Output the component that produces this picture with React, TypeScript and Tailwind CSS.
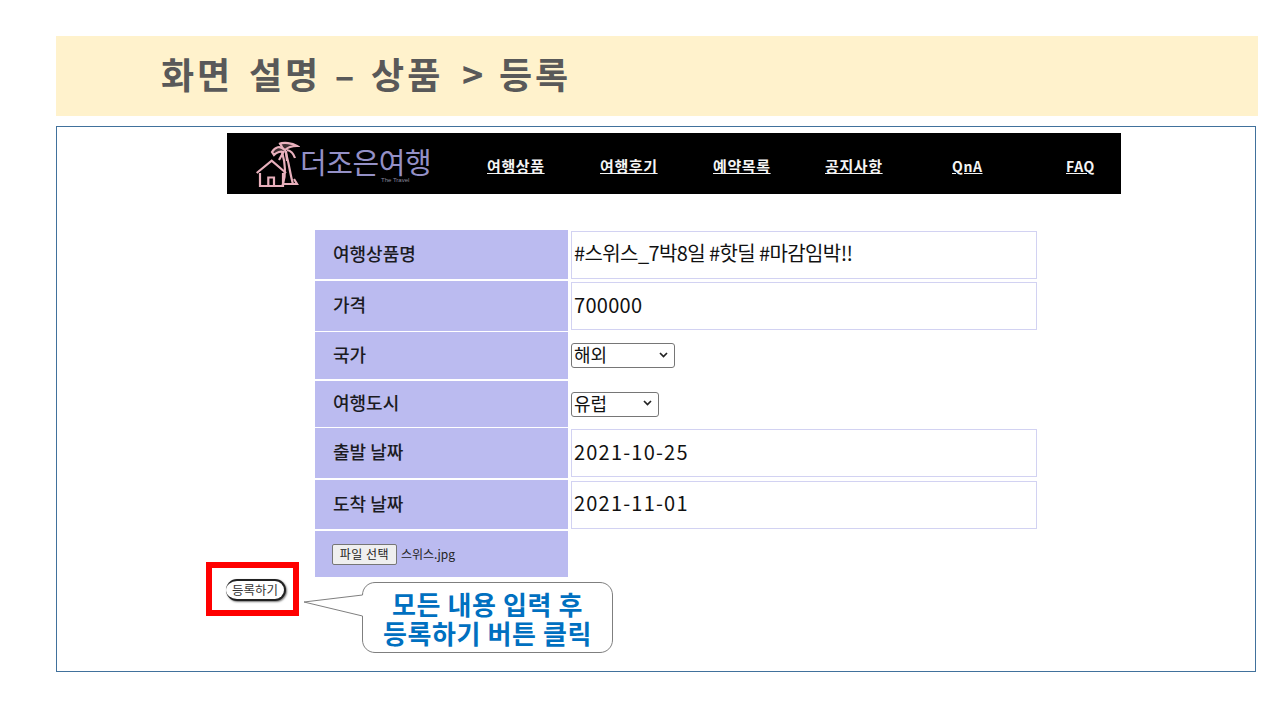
const kr = "font-['Noto_Sans_CJK_KR','Noto_Sans_KR',sans-serif]";

const menus = [
  { name: "여행상품", w: "w-[113px]", size: "text-[15px] tracking-[0.6px]" },
  { name: "여행후기", w: "w-[113px]", size: "text-[15px] tracking-[0.6px]" },
  { name: "예약목록", w: "w-[112px]", size: "text-[15px] tracking-[0.6px]" },
  { name: "공지사항", w: "w-[127px]", size: "text-[15px] tracking-[0.6px]" },
  { name: "QnA", w: "w-[114px]", size: "text-[14px] tracking-[0.6px]" },
  { name: "FAQ", w: "w-[40px]", size: "text-[14px] tracking-[0.6px]" },
];

function Logo() {
  return (
    <div className="relative flex w-[178px] h-full items-center">
      <svg width="50" height="52" viewBox="0 0 50 52" fill="none" stroke="#e8b0bc" strokeWidth="2.2" className="ml-[23px] shrink-0">
        <path d="M6.7 35 L21.7 22.7 L36 35 M10 35 V48 H33 V35 M18.3 48 V39.5 H24 V48" />
        <path d="M32 14 C35 24 36 36 33 46 H43 C40 36 39 24 35 12" />
        <path d="M42 46 H47 L44 41" />
        <path d="M35 12 C30 7 25 9 22 14 L24 17 C27 14 31 13 33 14" fill="#e8b0bc" fillOpacity="0.25" />
        <path d="M33 11 C30 6 31 5 29 6 C34 4 42 5 47 8 C42 8 38 9 35 12" fill="#e8b0bc" fillOpacity="0.25" />
        <path d="M34 13 L29 22 M36 13 L37 23 M37 12 C42 13 44 17 45 20" />
      </svg>
      <span className={`${kr} text-[29px] font-normal leading-none tracking-[-0.4px] text-[#9490c6] mt-[-4px] whitespace-nowrap`}>더조은여행</span>
      <span className="absolute left-[154px] top-[44px] text-[6px] leading-none whitespace-nowrap text-[#8a889f] font-['Liberation_Sans',sans-serif]">The Travel</span>
    </div>
  );
}

function TextBox({ value, track = "" }: { value: string; track?: string }) {
  return (
    <input
      readOnly
      value={value}
      className={`${kr} ${track} w-[466px] h-[48px] border border-[#d2d2f2] bg-white pl-[2px] pb-[4px] text-[20px] text-[#111] outline-none`}
    />
  );
}

function Row({ label, h, mb, children }: { label: string; h: string; mb: string; children?: React.ReactNode }) {
  return (
    <div className={`flex ${mb}`}>
      <div className={`${h} ${kr} w-[253px] shrink-0 bg-[#bbbbf0] flex items-center pl-[18px] pb-[3px] text-[18px] font-medium text-[#1b1b22]`}>
        {label}
      </div>
      <div className="ml-[3px] flex items-center">{children}</div>
    </div>
  );
}

function FakeSelect({ value, w }: { value: string; w: string }) {
  return (
    <div className={`${w} ${kr} h-[25px] rounded-[3px] border border-[#767676] bg-white flex items-center justify-between pl-[2px] pr-[6px] pb-[2px] text-[18px] text-[#111]`}>
      <span>{value}</span>
      <svg width="9" height="6" viewBox="0 0 9 6" fill="none" stroke="#222" strokeWidth="1.7">
        <path d="M1 1 L4.5 4.5 L8 1" />
      </svg>
    </div>
  );
}

export default function App() {
  return (
    <div className="w-[1280px] h-[720px] bg-white overflow-hidden pt-[36px] pl-[56px] relative">
      <div className="w-[1202px] h-[80px] bg-[#fff2cc] flex items-center pl-[105px] mb-[10px]">
        <h1 className={`${kr} text-[36px] font-bold text-[#595959] tracking-[3px] [word-spacing:4.5px] whitespace-pre mt-[-6px]`}>
          화면 설명 <span className="mx-[-2px]">–</span> 상품 <span className="ml-[3px] mr-[-3px]">{">"}</span> 등록
        </h1>
      </div>

      <div className="relative w-[1200px] h-[546px] border border-[#41719c] pt-[6px] pl-[170px]">
        <div className="w-[894px] h-[61px] bg-black flex items-center">
          <Logo />
          <nav className={`${kr} flex items-center pl-[82px] pt-[5px]`}>
            {menus.map((m) => (
              <a key={m.name} className={`${m.w} ${m.size} font-bold text-[#f4f4f4] underline whitespace-nowrap`}>
                {m.name}
              </a>
            ))}
          </nav>
        </div>

        <div className="ml-[88px] mt-[36px]">
          <Row label="여행상품명" h="h-[49px]" mb="mb-[2px]">
            <TextBox value="#스위스_7박8일 #핫딜 #마감임박!!" track="tracking-[-0.6px]" />
          </Row>
          <Row label="가격" h="h-[50px]" mb="mb-[1px]">
            <TextBox value="700000" track="tracking-[0.3px]" />
          </Row>
          <Row label="국가" h="h-[47px]" mb="mb-[2px]">
            <FakeSelect value="해외" w="w-[104px]" />
          </Row>
          <Row label="여행도시" h="h-[46px]" mb="mb-[1px]">
            <FakeSelect value="유럽" w="w-[88px]" />
          </Row>
          <Row label="출발 날짜" h="h-[50px]" mb="mb-[2px]">
            <TextBox value="2021-10-25" track="tracking-[1.2px]" />
          </Row>
          <Row label="도착 날짜" h="h-[49px]" mb="mb-[2px]">
            <TextBox value="2021-11-01" track="tracking-[1.2px]" />
          </Row>
          <div className="flex">
            <div className={`${kr} w-[253px] h-[46px] bg-[#bbbbf0] flex items-center pl-[17px] text-[12px] text-[#222]`}>
              <button className="h-[21px] w-[65px] rounded-[2px] border border-[#767676] bg-[#efefef] text-[12px] text-[#222] tracking-[0.5px]">파일 선택</button>
              <span className="ml-[4px]">스위스.jpg</span>
            </div>
          </div>
        </div>

        {/* 빨간 박스 + 말풍선 */}
        <div className="absolute left-[149px] top-[435px] w-[93px] h-[54px] border-[6px] border-[#ff0000]" />
        <button className={`${kr} absolute left-[169px] top-[452px] w-[60px] h-[22px] rounded-full border-2 border-l-0 border-[#222] bg-white text-[12.5px] text-[#333] shadow-[1px_1px_2px_#777]`}>등록하기</button>
        <svg width="312" height="74" viewBox="0 0 312 74" fill="white" stroke="#7f7f7f" className="absolute left-[246px] top-[455px]">
          <path d="M59.5 13 C59.5 6 65 0.5 72 0.5 H297 C304 0.5 309.5 6 309.5 13 V58 C309.5 65 304 70.5 297 70.5 H72 C65 70.5 59.5 65 59.5 58 V34 L1 20 L59.5 13 Z" />
        </svg>
        <div className={`${kr} absolute left-[305px] top-[456px] w-[251px] h-[70px] flex flex-col items-center justify-center text-[26px] leading-[29px] font-bold text-[#0070c0] tracking-[0.6px]`}>
          <span>모든 내용 입력 후</span>
          <span>등록하기 버튼 클릭</span>
        </div>
      </div>
    </div>
  );
}
